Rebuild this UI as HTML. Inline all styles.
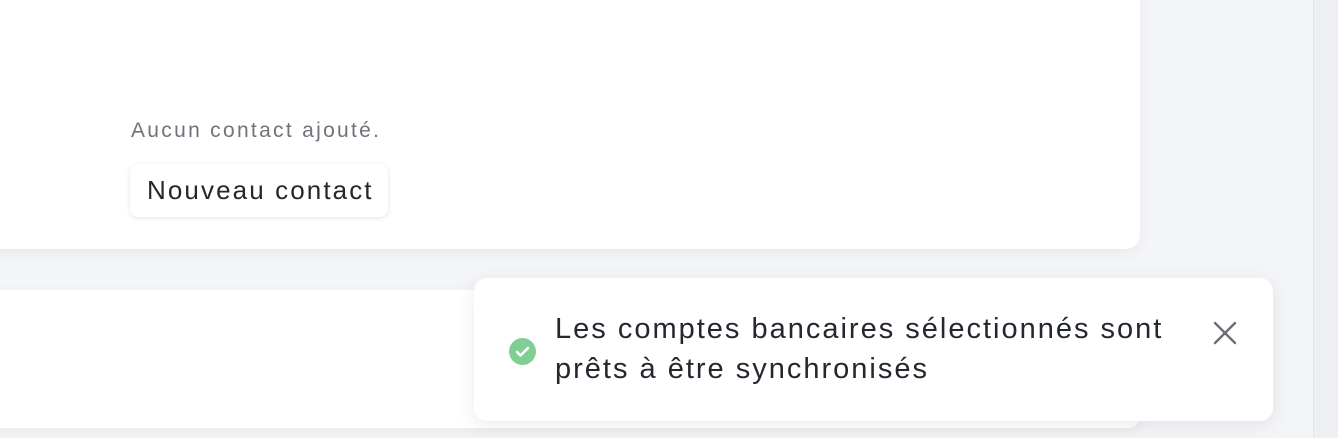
<!DOCTYPE html>
<html><head><meta charset="utf-8"><style>
*{margin:0;padding:0;box-sizing:border-box}
body{width:1338px;height:438px;background:#f4f5f8;position:relative;overflow:hidden;font-family:"Liberation Sans",sans-serif}
.card1{position:absolute;left:-20px;top:-20px;width:1160px;height:269px;background:#fff;border-radius:14px;box-shadow:0 4px 14px rgba(0,0,0,.05)}
.card2{position:absolute;left:-20px;top:290px;width:1160px;height:138px;background:#fff;border-radius:12px;box-shadow:0 4px 14px rgba(0,0,0,.05)}
.empty{position:absolute;left:131px;top:119px;font-size:21px;letter-spacing:2.3px;color:#70737a;white-space:nowrap}
.btn{position:absolute;left:130px;top:164px;width:258px;height:53px;border-radius:8px;background:#fff;box-shadow:0 1px 5px rgba(0,0,0,.12);font-size:26px;letter-spacing:2.1px;color:#23272e;line-height:53px;padding-left:17px;white-space:nowrap}
.scroll{position:absolute;left:1313px;top:0;width:25px;height:438px;background:#eeeff2;border-left:1px solid #e4e5e8}
.toast{position:absolute;left:474px;top:278px;width:799px;height:143px;background:#fff;border-radius:13px;box-shadow:0 4px 20px rgba(0,0,0,.08)}
.ico{position:absolute;left:35px;top:60px;width:27px;height:27px;border-radius:50%;background:#7fcf94}
.msg{position:absolute;left:81px;top:31px;font-size:29px;letter-spacing:2px;line-height:40px;color:#23272e;white-space:nowrap}
.x{position:absolute;left:738px;top:42px}
</style></head><body>
<div class="card1"></div>
<div class="empty">Aucun contact ajouté.</div>
<div class="btn">Nouveau contact</div>
<div class="card2"></div>
<div class="scroll"></div>
<div class="toast">
<div class="ico"><svg width="27" height="27" viewBox="0 0 27 27"><path d="M8 14l3.5 3.5L19 10" fill="none" stroke="#fff" stroke-width="2.6" stroke-linecap="round" stroke-linejoin="round"/></svg></div>
<div class="msg">Les comptes bancaires sélectionnés sont<br>prêts à être synchronisés</div>
<svg class="x" width="26" height="26" viewBox="0 0 26 26"><path d="M3 3L23 23M23 3L3 23" stroke="#6b6f75" stroke-width="2.4" stroke-linecap="round"/></svg>
</div>
</body></html>
